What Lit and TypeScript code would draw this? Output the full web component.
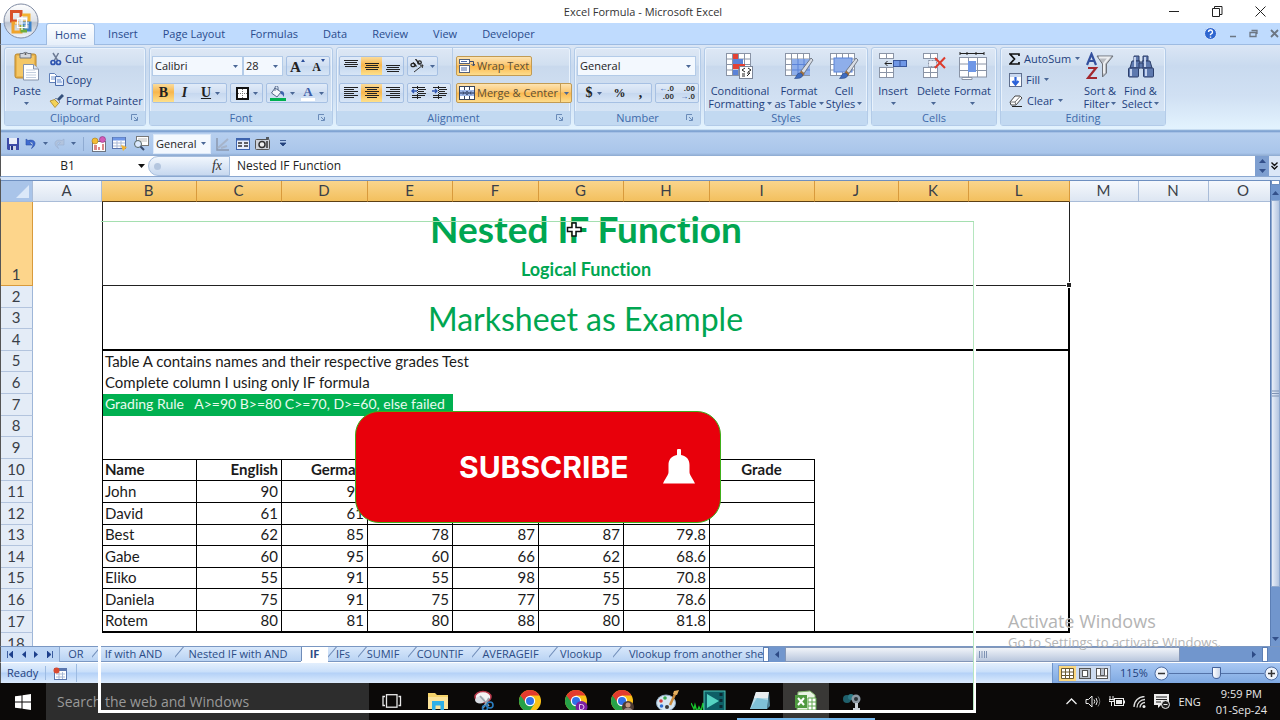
import { LitElement, html, css, svg, nothing } from "lit";
import { customElement } from "lit/decorators.js";
import { classMap } from "lit/directives/class-map.js";

const caret = html`<svg class="caret" width="5" height="3" viewBox="0 0 5 3"><path d="M0 0h5L2.5 3z" fill="currentColor" /></svg>`;

const launcher = html`<button class="launch" aria-label="More options">
  <svg width="8" height="8" viewBox="0 0 8 8" fill="none" stroke="#6a8bb8"><path d="M.5 6V.5H6" /><path d="M3 3l3 3M6.500 3v3.500H3" /></svg>
</button>`;

const icon = (w: number, h: number, body: unknown) =>
  html`<svg width=${w} height=${h} viewBox="0 0 ${w} ${h}" aria-hidden="true">${body}</svg>`;

const lines = (rows: number[][], color = "#222") =>
  rows.map(([x, y, w]) => svg`<rect x=${x} y=${y} width=${w} height="1" fill=${color} />`);

const brush = svg`<path d="M27 6 17 19l3 2.500L29 8z" fill="#d9dde5" stroke="#5d6470" stroke-width=".8"/>
  <path d="M17 18.500l3.500 3-1.500 3-3.500-3z" fill="#a0703c"/><path d="M15.500 21c2 0 3.500 1.500 3 3-1 2.500-5 2.500-8 2.500 2-1.500 2-5 5-5.500z" fill="#3f6cc0" stroke="#2c4a86" stroke-width=".6"/>`;

const gridLines = (x: number, y: number, cols: number, rows: number, cw: number, ch: number) => {
  const out = [svg`<rect x=${x} y=${y} width=${cols * cw} height=${rows * ch} fill="#fff" stroke="#8a94a6" />`];
  for (let i = 1; i < cols; i++) out.push(svg`<path d="M${x + i * cw} ${y}v${rows * ch}" stroke="#8a94a6"/>`);
  for (let j = 1; j < rows; j++) out.push(svg`<path d="M${x} ${y + j * ch}h${cols * cw}" stroke="#8a94a6"/>`);
  return out;
};

const I = {
  paste: icon(26, 30, svg`<rect x="1" y="3" width="21" height="24" rx="2" fill="#e9b44c" stroke="#b9862c"/>
    <rect x="3" y="5" width="17" height="20" fill="#f4c766"/>
    <path d="M6 2.500h3a3 2.500 0 0 1 5 0h3V7H6z" fill="#d4d8de" stroke="#6c7480"/><circle cx="11.500" cy="3" r="1" fill="#555"/>
    <path d="M9.500 13.500h10l5 4.500v11h-15z" fill="#fff" stroke="#8593ab"/><path d="M19.500 13.500v4.500h5" fill="#dbe5f3" stroke="#8593ab"/>
    <path d="M12 19h9M12 21.500h10M12 24h10M12 26.500h10" stroke="#c3cede"/>`),
  cut: icon(14, 14, svg`<path d="M4 1l5 8M9.500 1L5 9" stroke="#6c7a94" stroke-width="1.500"/><circle cx="4" cy="10.500" r="2" fill="none" stroke="#2f55b0" stroke-width="1.700"/><circle cx="9.500" cy="10.500" r="2" fill="none" stroke="#2f55b0" stroke-width="1.700"/>`),
  copy: icon(15, 13, svg`<path d="M.5.500h5l2 2v7h-7z" fill="#fff" stroke="#5f7fb8"/><path d="M6.500 3.500h5l3 3v6h-8z" fill="#e6eefb" stroke="#4a6cab"/><path d="M8 7h4M8 9h5M2 4h4M2 6h4" stroke="#6e93d0"/>`),
  painter: icon(15, 14, svg`<path d="M14 1L9 6" stroke="#34507c" stroke-width="3"/><path d="M7 4l4 4-1.500 1.500-4-4z" fill="#cdd6e6" stroke="#5c6c86" stroke-width=".7"/><path d="M5.500 5.500L1 7l5 6.500 3.500-4z" fill="#f3d257" stroke="#ad8724" stroke-width=".8"/>`),
  borders: icon(13, 13, svg`<rect x="1" y="1" width="11" height="11" fill="#fff" stroke="#111" stroke-width="2"/><path d="M6.500 2v9M2 6.500h9" stroke="#777" stroke-dasharray="1 1"/>`),
  fill: icon(16, 15, svg`<path d="M5 2l6 4-4 5-5.500-4z" fill="#f4f7fc" stroke="#55688a"/><path d="M5 5V1.500a1.500 1.500 0 0 1 3 0V4" fill="none" stroke="#55688a"/><path d="M11 5c3 0 4 3 2.500 6-.5-2-1-3-3-3z" fill="#3c62ab"/><rect y="12" width="16" height="3" fill="#00b050"/>`),
  grow: icon(4, 3, svg`<path d="M0 3h4L2 0z" fill="#2c4f9a"/>`),
  shrink: icon(4, 3, svg`<path d="M0 0h4L2 3z" fill="#2c4f9a"/>`),
  top: icon(14, 14, lines([[0, 1, 14], [1, 3, 12], [0, 5, 14], [1, 7, 12]])),
  mid: icon(14, 14, lines([[0, 4, 14], [1, 6, 12], [0, 8, 14], [1, 10, 12]])),
  bot: icon(14, 14, lines([[0, 6, 14], [1, 8, 12], [0, 10, 14], [1, 12, 12]])),
  left: icon(14, 14, lines([[0, 1, 14], [0, 3, 10], [0, 5, 14], [0, 7, 10], [0, 9, 14], [0, 11, 10]])),
  center: icon(14, 14, lines([[0, 1, 14], [2, 3, 10], [0, 5, 14], [2, 7, 10], [0, 9, 14], [2, 11, 10]])),
  right: icon(14, 14, lines([[0, 1, 14], [4, 3, 10], [0, 5, 14], [4, 7, 10], [0, 9, 14], [4, 11, 10]])),
  orient: icon(16, 14, svg`<path d="M4 13L13 6M13 6l-3 .3M13 6l-.8 3" stroke="#333" fill="none"/><ellipse cx="3" cy="6" rx="2" ry="1.700" fill="none" stroke="#222" stroke-width="1.300"/><path d="M3 3.500l3.500 4M5.500 0l4 5" stroke="#222" stroke-width="1.300"/><ellipse cx="9.500" cy="3.500" rx="1.800" ry="1.600" fill="none" stroke="#222" stroke-width="1.300"/>`),
  outdent: icon(15, 14, svg`${lines([[1, 1, 13], [7, 3, 8], [7, 5, 6], [7, 7, 8], [1, 9, 13], [1, 11, 9]])}<path d="M6 5H1M3 3L1 5l2 2" stroke="#2f55b0" stroke-width="1.400" fill="none"/><path d="M6.500 0v13" stroke="#222" stroke-dasharray="1 1"/>`),
  indent: icon(15, 14, svg`${lines([[1, 1, 13], [7, 3, 8], [7, 5, 6], [7, 7, 8], [1, 9, 13], [1, 11, 9]])}<path d="M0 5h5M3 3l2 2-2 2" stroke="#2f55b0" stroke-width="1.400" fill="none"/><path d="M6.500 0v13" stroke="#222" stroke-dasharray="1 1"/>`),
  wrap: icon(16, 14, svg`<rect x=".5" y=".5" width="10" height="4" fill="#fff" stroke="#54617a"/><path d="M2 2.500h6" stroke="#4b69a8"/><rect x=".5" y="6.500" width="10" height="7" fill="#fff" stroke="#54617a"/><path d="M2 9h6M2 11h6" stroke="#4b69a8"/><path d="M11 2.500h3.500v4M12.500 5l2 2 1.500-2" fill="none" stroke="#394a6c"/>`),
  merge: icon(16, 14, svg`<rect x=".5" y=".5" width="15" height="13" fill="#fff" stroke="#39465e"/><path d="M5.500 1v3M10.500 1v3M5.500 10v3M10.500 10v3" stroke="#39465e"/><rect x="1" y="4" width="14" height="6" fill="#9cb6e6"/><path d="M1 7h4M15 7h-4M4 5.500L5.500 7 4 8.500M12 5.500L10.500 7 12 8.500" stroke="#1d2b4d" fill="none"/><circle cx="8" cy="7" r="1.300" fill="none" stroke="#1d2b4d"/>`),
  cond: icon(30, 28, svg`${gridLines(1.5, 1.5, 4, 4, 6, 5.5)}<rect x="8" y="2" width="5" height="5" fill="#e34234"/><rect x="8" y="7" width="10" height="5" fill="#5b83d8"/><rect x="8" y="12" width="12" height="5" fill="#e34234"/><rect x="8" y="18" width="5" height="5" fill="#5b83d8"/><rect x="14.500" y="14.500" width="13" height="12" fill="#fff" stroke="#7c8699"/><path d="M20 16l-3 2 3 2M17 22h3M17 24h3M23 16l3 2-3 2M22 24l3-3M22 21h3" stroke="#222" fill="none"/>`),
  fmtTable: icon(30, 28, svg`${gridLines(1.5, 1.5, 4, 4, 6, 5.5)}<rect x="8" y="7" width="18" height="16" fill="#8eaeea"/><path d="M14 7v16M20 7v16M8 12.500h18M8 18h18" stroke="#5b83d8"/>${brush}`),
  styles: icon(30, 28, svg`${gridLines(1.5, 1.5, 4, 4, 6, 5.5)}<rect x="5" y="6" width="18" height="14" fill="#8eaeea" stroke="#5b83d8"/>${brush}`),
  insert: icon(30, 28, svg`${gridLines(1.5, 1.5, 2, 1, 7, 5)}${gridLines(1.5, 15.5, 2, 2, 7, 5)}<rect x="15.500" y="8.500" width="13" height="6" fill="#6f97e6" stroke="#39579c"/><path d="M22 8.500v6" stroke="#39579c"/><path d="M14 11.500H7M9.500 9L7 11.500 9.500 14" stroke="#222" fill="none"/>`),
  del: icon(30, 28, svg`${gridLines(4.5, 1.5, 2, 1, 7, 5)}${gridLines(4.5, 15.5, 2, 2, 7, 5)}<path d="M9.500 8.500h8v6h-8z" fill="#e8edf6" stroke="#8a94a6" stroke-dasharray="2 1"/><path d="M16 6l10 10M26 5.500L16 16" stroke="#dd3b2c" stroke-width="2"/>`),
  format: icon(30, 28, svg`<path d="M2 1.500h24M2 0v3M26 0v3M9 0v3M18 0v3" stroke="#222"/>${gridLines(1.5, 5.5, 3, 3, 9, 6.5)}<rect x="10" y="9" width="8" height="11" fill="#6f97e6"/><path d="M4 25.500h10v2H4z" fill="#fff" stroke="#8a94a6"/>`),
  sum: icon(11, 12, svg`<path d="M10 3V1H1l4.500 5L1 11h9V9" fill="none" stroke="#111" stroke-width="1.700"/>`),
  fillDown: icon(13, 14, svg`<rect x=".5" y=".5" width="12" height="13" fill="#fff" stroke="#5f6f8e"/><rect x="1" y="1" width="11" height="3" fill="#c9d8f0"/><path d="M6.500 4v6M3.500 8l3 3.500 3-3.500" stroke="#2b62d9" stroke-width="2.200" fill="none"/>`),
  clear: icon(14, 12, svg`<path d="M6 1h5l2 2-6 7H2L1 7z" fill="#fff" stroke="#444"/><path d="M1 7h5l1 3M6 7l5.500-6" stroke="#777" fill="none"/><path d="M3 11.500h10" stroke="#222"/>`),
  sort: icon(28, 28, svg`<path d="M11 4h16l-6.500 8v9l-4 4V12z" fill="#b9bcc2" stroke="#6d7178"/><path d="M13 5.500h10l-5 6v10" fill="none" stroke="#eceef1" stroke-width="2"/><path d="M1 13L5.500 2 10 13M3 9h5" stroke="#33509e" stroke-width="2.200" fill="none"/><path d="M2 16h8L2 26h9" stroke="#a3282e" stroke-width="2.200" fill="none"/>`),
  find: icon(28, 26, svg`<g fill="#5e79ae" stroke="#2c3f6b"><path d="M7 3h5v5h-5zM16 3h5v5h-5z"/><path d="M5 8h8v7H3zM15 8h8l2 7H15z"/><rect x="1.500" y="15" width="10" height="9" rx="1"/><rect x="16.500" y="15" width="10" height="9" rx="1"/><path d="M12 10h4v5h-4z"/></g><path d="M4 16v7M19 16v7M8 4v10M18 4v10" stroke="#c5d3ee" stroke-width="2"/>`),
  save: icon(12, 12, svg`<path d="M0 0h12v12H1L0 11z" fill="#3d4ba8"/><rect x="2" y="0" width="8" height="6" fill="#e9edf8"/><rect x="3" y="8" width="6" height="4" fill="#cdd3e8"/><rect x="4" y="8" width="2" height="4" fill="#22307f"/>`),
  undo: icon(12, 12, svg`<path d="M1 1v6h6L4.500 4.500c3-1.500 5 1 2 6 6-4 4-10-3.500-8z" fill="#3f6bd0" stroke="#2a4ea5" stroke-width=".6"/>`),
  redo: icon(12, 12, svg`<path d="M11 1v6H5l2.500-2.500c-3-1.500-5 1-2 6-6-4-4-10 3.500-8z" fill="#b2c4de" stroke="#98aed0" stroke-width=".6"/>`),
  q1: icon(16, 16, svg`<rect x="1.500" y="5.500" width="13" height="10" fill="#fff" stroke="#6d7480"/><path d="M3 14V9h3v5M7 14v-3h2v3M11 14V8h2v6" fill="#d88"/><circle cx="4" cy="5" r="3" fill="#f3bd34" stroke="#a87b15" stroke-width=".6"/><circle cx="11.500" cy="3.500" r="3" fill="#d35bb8" stroke="#8c2f78" stroke-width=".6"/>`),
  q2: icon(16, 14, svg`<rect x=".5" y=".5" width="13" height="11" fill="#fff" stroke="#5a76ae"/><path d="M1 2h12" stroke="#6f97e6" stroke-width="3"/><path d="M1 6h12M1 9h12M5 4v7M9 4v7" stroke="#a9b9d6"/><path d="M9 8l6 2-4 4z" fill="#f0b437"/>`),
  q3: icon(16, 15, svg`<rect x="3.500" y=".5" width="12" height="9" fill="#fff" stroke="#777"/><path d="M5 3h9M5 5h9" stroke="#bbb"/><circle cx="5" cy="8" r="3.500" fill="#dceaff" stroke="#566"/><path d="M7.500 10.500L11 14" stroke="#3b4c6e" stroke-width="2"/>`),
  q4: icon(14, 14, svg`<path d="M1 1v12h12" fill="none" stroke="#8b98ae" stroke-width="1.500"/><path d="M2 11L12 2M5 11l6-2" stroke="#a6b4ca" stroke-width="2"/>`),
  q5: icon(14, 12, svg`<rect x=".5" y=".5" width="13" height="11" fill="#e8eefa" stroke="#3e64ae"/><path d="M1 1.500h12" stroke="#3e64ae" stroke-width="2"/><path d="M2 5h4M8 5h4M2 8h4M8 8h4" stroke="#333" stroke-width="1.500"/>`),
  q6: icon(15, 13, svg`<rect x=".5" y="2.500" width="14" height="10" rx="1" fill="#cfd3da" stroke="#555"/><circle cx="7" cy="7.500" r="3" fill="#eee" stroke="#333" stroke-width="1.500"/><path d="M11 1h3M12 4v7" stroke="#333" stroke-width="1.500"/>`),
};

const chromeLogo = (badge: unknown = nothing) => icon(24, 24, svg`<g transform="translate(1 1)"><circle cx="11" cy="11" r="11" fill="#fbc116"/>
  <path d="M11 11L1.500 5.500A11 11 0 0 0 10 22l5.700-8.500z" fill="#26a148"/><path d="M1.500 5.500A11 11 0 0 1 20.500 5.500H11L7 13z" fill="#e33b2e"/>
  <circle cx="11" cy="11" r="5.200" fill="#fff"/><circle cx="11" cy="11" r="4" fill="#2f72e8"/>${badge}</g>`);

const APPS = [
  { name: "Task View", open: "", art: icon(20, 14, svg`<g fill="none" stroke="#e8e8e8" stroke-width="1.300"><rect x="4.500" y=".7" width="10.500" height="12.500"/><path d="M3 2.500H1v9h2M16.500 2.500h2v9h-2"/></g>`) },
  { name: "File Explorer", open: "", art: icon(22, 20, svg`<path d="M1 2h7l2 2h11v14H1z" fill="#f5d36a"/><path d="M1 6h20v12H1z" fill="#fbe39a"/><path d="M5 10h12v9h-3.500v-4.500h-5V19H5z" fill="#2fb0e6"/>`) },
  { name: "Snipping Tool", open: "", art: icon(24, 22, svg`<ellipse cx="11" cy="7" rx="8" ry="5.500" fill="#f3f3f5" stroke="#b9394c" stroke-width="1.500"/><ellipse cx="8" cy="10" rx="5" ry="3.500" fill="#d9dde3"/><path d="M8 6l9 10M17 8l-6 10" stroke="#9aa3ad" stroke-width="1.800"/><circle cx="18" cy="15" r="3" fill="none" stroke="#2c7fc0" stroke-width="1.600"/><circle cx="13" cy="18" r="2.500" fill="none" stroke="#2c7fc0" stroke-width="1.600"/>`) },
  { name: "Chrome", open: "", art: chromeLogo() },
  { name: "Chrome", open: "", art: chromeLogo(svg`<circle cx="16.500" cy="17" r="6" fill="#7b1fa2"/><path d="M14.500 14.500h2a2.500 2.500 0 0 1 0 5h-2z" fill="none" stroke="#e8c8f4"/>`) },
  { name: "Chrome", open: "", art: chromeLogo(svg`<circle cx="17" cy="17" r="6" fill="#4c3a33"/><circle cx="17" cy="15" r="2.500" fill="#c79a80"/><path d="M12.500 20a5 4 0 0 1 9 0z" fill="#9a8a84"/>`) },
  { name: "Paint", open: "", art: icon(24, 22, svg`<ellipse cx="10" cy="13" rx="9.500" ry="8" fill="#d6e6f2" stroke="#8eabc4"/><circle cx="5" cy="11" r="1.800" fill="#d63c3c"/><circle cx="9" cy="8" r="1.800" fill="#3aa851"/><circle cx="5.500" cy="16" r="1.800" fill="#2f6fd6"/><circle cx="11" cy="17" r="2" fill="#3a3a3a"/><path d="M20 2L14 15" stroke="#c98a3c" stroke-width="2.500"/><path d="M18 1l5-1-2 5-4-1z" fill="#e6b05f"/>`) },
  { name: "Filmora", open: "", art: icon(46, 24, svg`<path d="M0 14l3 6 1-4 2 7 2-5 2 4 2-8 1 7 2-3" stroke="#17c52c" stroke-width="1.400" fill="none"/><rect x="13" y="2" width="21" height="20" fill="#0d5f66" stroke="#4fc7b8"/><path d="M16 5l12 7-12 7z" fill="#55d3c2"/><path d="M30 4v3M30 10v3M30 16v3" stroke="#0a2a33" stroke-width="3"/>`) },
  { name: "Notepad", open: "open", art: icon(24, 22, svg`<path d="M8 2h13l-2 17H2z" fill="#b7dbe8"/><path d="M8 2h13l-1 6H6z" fill="#e9eef0"/><path d="M9 8l11 2-1 9H2z" fill="#7fc0d6"/><path d="M21 2l-2 17 3-3z" fill="#4c8197"/>`) },
  { name: "Excel", open: "open current", art: icon(24, 22, svg`<path d="M4 2l12-1 5 4v15H3z" fill="#e8f3e2" stroke="#7fb069"/><path d="M1 5h12v13H1z" fill="#4f9a3f"/><path d="M4 8l6 7M10 8l-6 7" stroke="#fff" stroke-width="2"/><path d="M14 8h8v12h-8zM14 12h8M14 16h8M18 8v12" fill="#fff" stroke="#5fa64c"/>`) },
  { name: "Camera", open: "open", art: icon(24, 22, svg`<circle cx="7" cy="9" r="4" fill="#1f5f6b"/><circle cx="11" cy="7" r="3" fill="#2b7a86"/><circle cx="16" cy="9" r="4.500" fill="#8d99a3"/><circle cx="16" cy="9" r="2" fill="#2a3338"/><path d="M15 13h3v5h2v2h-7v-2h2z" fill="#c9d0d6"/>`) },
];

const COLS = [
  ["A", 69], ["B", 95], ["C", 85], ["D", 86], ["E", 85], ["F", 86], ["G", 85], ["H", 86],
  ["I", 105], ["J", 84], ["K", 70], ["L", 101], ["M", 69], ["N", 70], ["O", 70],
] as [string, number][];

const HEAD = ["Name", "English", "German", "", "", "", "", "Grade"];
const MARKS = [
  ["John", "90", "90", "", "", "", "", ""],
  ["David", "61", "61", "", "", "", "", ""],
  ["Best", "62", "85", "78", "87", "87", "79.8", ""],
  ["Gabe", "60", "95", "60", "66", "62", "68.6", ""],
  ["Eliko", "55", "91", "55", "98", "55", "70.8", ""],
  ["Daniela", "75", "91", "75", "77", "75", "78.6", ""],
  ["Rotem", "80", "81", "80", "88", "80", "81.8", ""],
];

const SHEETS = ["OR", "If with AND", "Nested IF with AND", "IF", "IFs", "SUMIF", "COUNTIF", "AVERAGEIF", "Vlookup", "Vlookup from another sheet"];

@customElement("app-root")
export class AppRoot extends LitElement {
  static styles = css`
    :host { display: flex; flex-direction: column; position: relative; height: 100vh; overflow: hidden; background: #fff;
      font: 11px/14px "Open Sans", "Noto Sans", sans-serif; color: #1e3f7d; }
    *, *::before { box-sizing: border-box; }
    svg { display: block; flex: none; }
    button { font: inherit; color: inherit; background: none; border: 0; padding: 0; margin: 0; display: flex; align-items: center; justify-content: center; white-space: nowrap; }
    input, select { font: inherit; color: inherit; border: 0; margin: 0; padding: 0; border-radius: 0; background: none; min-width: 0; outline: 0; appearance: none; }
    .title { height: 23px; flex: none; display: grid; grid-template-columns: 1fr auto 1fr; align-items: center; padding-left: 6px; color: #333; }
    .title h1 { font: inherit; margin: 0; grid-column: 2; }
    .winbtns { display: flex; justify-content: flex-end; gap: 32px; padding-right: 14px; }
    .orb { position: absolute; left: 3px; top: 3px; width: 36px; height: 36px; z-index: 3; }
    .tabs { height: 22px; flex: none; display: flex; gap: 1px; padding-left: 45px; background: #bfdbfe; border-bottom: 1px solid #9dbbe2; border-left: 1px solid #555; color: #2a4b8d; }
    .tabs > button { padding: 0 12px; height: 22px; }
    .tabs .on { background: linear-gradient(#fff, #e6effa); border: 1px solid #9dbbe2; border-bottom: 0; border-radius: 3px 3px 0 0; padding: 0 8px; }
    .docbtns { margin-left: auto; display: flex; gap: 12px; align-items: center; padding-right: 1px; }
    .ribbon { height: 84px; flex: none; display: flex; gap: 3px; padding: 2px 3px 3px; background: linear-gradient(#dbe6f5, #c9daef 25%, #d0e0f3 60%, #e3f3fe); border-left: 1px solid #555; }
    .group { display: flex; flex-direction: column; flex: none; border: 1px solid #b3cbe8; border-radius: 3px; background: linear-gradient(#dee8f5, #d1dff0 22%, #c9d9ed 24%, #d9e7f7); box-shadow: 0 0 0 1px #e9f2fc inset; }
    .body { flex: 1; display: flex; min-height: 0; }
    .cap { height: 14px; display: grid; grid-template-columns: 16px 1fr 16px; align-items: center; text-align: center; background: #c2d9f1; color: #3e6aaa; }
    .cap span { grid-column: 2; }
    .launch { width: 12px; }
    .w1 { width: 142px; } .w2 { width: 184px; } .w3 { width: 235px; } .w4 { width: 127px; } .w5 { width: 164px; } .w6 { width: 126px; } .w7 { width: 166px; }
    .big { flex-direction: column; justify-content: flex-start; padding-top: 2px; gap: 3px; text-align: center; line-height: 13px; }
    .big .ico { height: 31px; display: flex; align-items: center; }
    .big .two { display: flex; align-items: center; gap: 2px; }
    .big .lbl { display: flex; flex-direction: column; align-items: center; }
    .big .solo { height: 12px; display: flex; align-items: center; }
    .caret { color: #4a6796; }
    .small { display: flex; flex-direction: column; justify-content: flex-start; }
    .small button { height: 21px; justify-content: flex-start; gap: 2px; }
    .clip .big { width: 44px; }
    .edit .small { width: 78px; padding-left: 8px; }
    .edit .small button { gap: 4px; }
    .big.b70 { width: 70px; }
    .big.b50 { width: 48px; }
    .big.b42 { width: 42px; }
    .big.b38 { width: 39px; }
    .rows { flex: 1; display: flex; flex-direction: column; gap: 7px; padding: 8px 3px 0 2px; }
    .row { display: flex; gap: 3px; height: 20px; }
    .box { display: flex; border: 1px solid #a6c0e3; border-radius: 2px; background: linear-gradient(#e1ebf8, #cfdef2 50%, #c6d8ef 52%, #d7e5f6); }
    .box button { width: 21px; gap: 4px; }
    .box button.wide { width: 31px; }
    .box button.w29 { width: 29px; }
    .box button.size { gap: 0; align-items: flex-start; padding-top: 2px; }
    .box .sel { background: linear-gradient(#fbdc9c, #f7b64c 45%, #fde08b); }
    .serif { font: bold 14px/16px "Liberation Serif", serif; color: #222; }
    .serif.it { font-style: italic; }
    .serif.un { text-decoration: underline; }
    .serif.sm { font-size: 12px; }
    .serif.lg { font-size: 15px; }
    .fc { display: flex; flex-direction: column; align-items: center; font: bold 13px/13px "Liberation Serif", serif; color: #3b5ba5; border-bottom: 3px solid #fff; width: 14px; }
    .combo { display: grid; background: #f3f8fe; border: 1px solid #b3cbe8; color: #222; align-items: center; }
    .combo select, .combo .caret { grid-area: 1 / 1; }
    .combo select { padding-left: 2px; width: 100%; height: 100%; }
    .combo .caret { justify-self: end; margin-right: 4px; pointer-events: none; }
    .cname { width: 91px; } .csize { width: 40px; margin-left: -3px; } .cnum { width: 119px; }
    .hot { border: 1px solid #c29b53; border-radius: 2px; gap: 2px; color: #5d5136; background: linear-gradient(#fde3b1, #fbc772 45%, #fbb84e 50%, #fddc8c); height: 20px; padding: 0 2px; }
    .hot .drop { border-left: 1px solid #c29b53; height: 18px; display: flex; align-items: center; padding-left: 3px; }
    .colR { display: flex; flex-direction: column; gap: 7px; padding: 8px 2px 0 3px; }
    .colR .hot { align-self: flex-start; }
    .align .rows { flex: none; width: 116px; padding-right: 0; border-right: 1px solid #b6cbe6; }
    .tiny { font: bold 8px/8px "Liberation Sans", sans-serif; color: #333; text-align: right; }
    .tiny i { font-style: normal; color: #2f55b0; }
    .qat { height: 27px; flex: none; display: flex; align-items: center; gap: 5px; padding: 2px 0 0 4px; background: linear-gradient(#e3f3fe, #6f96ca 2px, #b7cfef 4px, #a9c5ea 24px, #8daad0); border-left: 1px solid #555; }
    .qat button { min-width: 15px; height: 18px; gap: 6px; }
    .qat .gen { width: 58px; height: 20px; margin: 0 -1px; border-color: #dbe8f8; }
    .bar { width: 1px; height: 14px; background: #8fabd2; margin: 0 2px; }
    .fbar { height: 21px; flex: none; display: flex; border-left: 1px solid #555; border-bottom: 1px solid #8aa7d0; color: #222; font-size: 12px; background: #fff; }
    .fbar .name { width: 133px; text-align: center; }
    .fbar .nd { width: 14px; color: #222; }
    .fbar .fx { width: 82px; border-radius: 10px 0 0 10px; border: 1px solid #a6bede; background: linear-gradient(#f2f7fd, #c7d8ef); justify-content: flex-end; padding-right: 7px; font: italic 14px/16px "Liberation Serif", serif; color: #333; }
    .fbar .fx i { margin-right: auto; margin-left: 5px; width: 7px; height: 7px; border-radius: 50%; background: #b4c6df; }
    .fbar .val { flex: 1; padding-left: 7px; font-size: 12px; }
    .spin { width: 14px; background: #7e9fd0; flex-direction: column; gap: 6px; color: #33508a; }
    .exp { width: 11px; background: #dbe7f7; }
    .mid { flex: 1; min-height: 0; display: flex; border-top: 3px solid #d6e5f8; border-left: 1px solid #555; }
    .view { flex: 1; min-width: 0; overflow: hidden; border-top: 1px solid #6e8fc0; }
    table { table-layout: fixed; border-collapse: separate; border-spacing: 0; width: 0; font: 15px/18px Lato, "Open Sans", sans-serif; font-variant-ligatures: none; color: #1b1b1b; }
    th, td { padding: 0 3px 2px 2px; overflow: hidden; white-space: nowrap; height: 22px; text-align: right; font-weight: normal; }
    tr.odd > th, tr.odd > td { height: 21px; }
    .rh { width: 32px; }
    thead th { height: 21px; text-align: center; background: linear-gradient(#f5f8fd, #dde6f2); border-right: 1px solid #a9bcd8; border-bottom: 1px solid #a9bcd8; color: #3a3f48; }
    thead th.on { background: linear-gradient(#fad58c, #f3c05e); border-right-color: #d89a3c; border-bottom: 1px solid #5c3f14; }
    thead .corner { background: #a9c4e9; padding: 2px 3px; }
    .corner svg { margin-left: auto; }
    tbody th { text-align: center; background: #e4ecf7; border-right: 1px solid #9eb6d8; border-bottom: 1px solid #b3c4de; color: #3a3f48; }
    tbody th.on { background: #fdd58b; border-color: #d89a3c; vertical-align: bottom; }
    tr.first > th, tr.first > td { height: 84px; }
    .t { text-align: left; }
    td.m1 { border: 1px solid #222; border-top: 0; text-align: center; color: #00a651; padding: 0; vertical-align: top; }
    td.m1 strong { display: block; font-size: 37px; line-height: 54px; }
    td.m1 b { display: block; font-size: 18px; line-height: 26px; }
    td.m2 { border: 2px solid #000; border-top: 0; border-left-width: 1px; text-align: center; color: #00a651; font-size: 32px; line-height: 40px; padding: 2px 0 0; }
    td.end { border-right: 2px solid #000; }
    td.start { border-left: 1px solid #000; }
    td.green { background: #00b050; color: #e9fbef; border-left: 1px solid #000; text-align: left; font-size: 14px; }
    td.d { border-right: 1px solid #000; border-bottom: 1px solid #000; }
    td.d.l { border-left: 1px solid #000; text-align: left; }
    td.hd { font-weight: bold; border-top: 1px solid #000; }
    td.last { border-bottom: 2px solid #000; }
    td.c { text-align: center; }
    .vs { width: 10px; flex: none; display: flex; flex-direction: column; background: #7196cd; border-left: 1px solid #5c7fb5; align-items: stretch; }
    .vs i { height: 5px; background: #fff; border: 1px solid #6e8fc0; }
    .vs button { height: 15px; color: #2d4a86; }
    .vs .thumb { flex: 1; background: linear-gradient(90deg, #e8eef8, #b3c5e0); border: 1px solid #8fa9cf; color: #6f86ab; }
    .vs .track { height: 44px; }
    .foot { height: 16px; flex: none; display: flex; background: #bcd5f5; border-left: 1px solid #555; border-top: 1px solid #7a97c2; }
    .nav { width: 59px; display: flex; justify-content: space-around; color: #1c3f8b; border-right: 1px solid #8aa7d0; padding: 0 2px; }
    .sheets { width: 703px; display: grid; grid-template-columns: 32px 83px 126px 27px 30px 50px 64px 77px 64px 1fr; overflow: hidden; font-size: 11px; color: #2b4c86; }
    .sheets button { position: relative; background: linear-gradient(#d8e8fb, #b9d3f3); border-bottom: 1px solid #7a97c2; overflow: hidden; }
    .sheets button:not(:first-child)::before { content: ""; position: absolute; left: 2px; top: -3px; width: 1px; height: 20px; background: #6f8cb8; transform: rotate(40deg); }
    .sheets .act { background: #fff; font-weight: bold; border-bottom-color: #fff; }
    .sheets button.act::before { transform: none; left: 0; }
    .sheets button:last-child { justify-content: flex-start; padding-left: 16px; }
    .grip { width: 6px; background: #fff; border: 1px solid #5c7fb5; }
    .gap { width: 12px; background: #7196cd; }
    .hs { flex: 1; display: flex; background: #7196cd; color: #2d4a86; }
    .hs button { width: 16px; }
    .hs .thumb { flex: 6; background: linear-gradient(#f1f4f9, #b9c7dd); border: 1px solid #8296b8; color: #7788a5; }
    .hs .track { flex: 1; max-width: 66px; }
    .status { height: 21px; flex: none; display: flex; align-items: center; background: linear-gradient(#e3effd, #c9dffa 45%, #b4d1f7 50%, #dcebfd); border-left: 1px solid #555; border-top: 1px solid #fff; }
    .status .rd { padding: 0 7px 0 6px; border-right: 1px solid #9dbbe2; }
    .status .mac { padding: 0 9px 0 7px; border-right: 1px solid #9dbbe2; height: 18px; }
    .zoomer { margin-left: auto; height: 20px; width: 228px; display: flex; align-items: center; padding: 0 1px 0 5px; background: linear-gradient(#a9c8f3, #7fa9e2); border-left: 1px solid #6f94c9; }
    .views { display: flex; border: 1px solid #7f9cc8; background: #cddcf1; margin-right: 9px; }
    .views button { width: 17px; height: 15px; }
    .views .on { background: #fbd87f; }
    .pct { margin-right: 6px; }
    .range { flex: 1; height: 16px; background: linear-gradient(#5473a8, #5473a8) 0 8px / 100% 1px no-repeat; }
    .range::-webkit-slider-thumb { appearance: none; width: 9px; height: 12px; border: 1px solid #44629a; background: linear-gradient(90deg, #fff, #c9d6ea); border-radius: 1px 1px 5px 5px; }
    .task { height: 37px; flex: none; display: flex; background: #0b0908; color: #e8e8e8; font-size: 11px; }
    .start { width: 46px; }
    .search { width: 323px; background: #2d2d2d; padding-left: 11px; font-size: 14px; color: #999; }
    .search::placeholder { color: #999; }
    .apps { display: flex; }
    .apps button { width: 46px; border-bottom: 2px solid transparent; }
    .apps .open { border-bottom-color: #76b9ed; background-clip: padding-box; }
    .apps .current { background-color: #393836; }
    .tray { margin-left: auto; display: flex; align-items: center; gap: 8px; padding-right: 13px; }
    .clock { text-align: center; line-height: 16px; margin-left: 7px; }
    .frame { position: absolute; left: 98px; right: 304px; top: 221px; bottom: 7px; border: solid #fff; border-width: 0 2px 3px 3px; box-shadow: inset 0 1px #a5dfb0, inset -1px 0 #b5e6bf; pointer-events: none; z-index: 4; }
    .sub { position: absolute; left: 355px; top: 411px; width: 366px; height: 112px; z-index: 5; border-radius: 24px; background: #e8000b; border: 1px solid #3fae1b; color: #fff; font: bold 30px/34px Inter, sans-serif; gap: 34px; justify-content: flex-start; padding-left: 103px; }
    .cursor { position: absolute; left: 566px; top: 222px; z-index: 6; }
    .handle { position: absolute; left: 1066px; top: 282px; width: 6px; height: 6px; background: #222; border: 1px solid #fff; z-index: 2; }
    .wm { position: absolute; right: 49px; bottom: 68px; width: 223px; margin: 0; z-index: 6; color: #b4b4b4; font-size: 13px; line-height: 20px; pointer-events: none; white-space: nowrap; }
    .wm span { display: block; font-size: 18px; line-height: 22px; }
  `;

  private big(cls: string, ico: unknown, a: string, b?: string) {
    return html`<button class="big ${cls}"><span class="ico">${ico}</span>
      <span class="lbl"><span>${a}</span>${b ? html`<span class="two">${b}${caret}</span>` : html`<span class="solo">${caret}</span>`}</span></button>`;
  }

  private group(w: string, cap: string, body: unknown, more = false) {
    return html`<section class="group ${w}"><div class="body">${body}</div><div class="cap"><span>${cap}</span>${more ? launcher : nothing}</div></section>`;
  }

  private ribbon() {
    return html`<div class="ribbon">
      ${this.group("w1 clip", "Clipboard", html`${this.big("", I.paste, "Paste")}
        <div class="small"><button>${I.cut}Cut</button><button>${I.copy}Copy</button><button>${I.painter}Format Painter</button></div>`, true)}
      ${this.group("w2", "Font", html`<div class="rows">
        <div class="row">
          <label class="combo cname"><select aria-label="Font"><option>Calibri</option></select>${caret}</label>
          <label class="combo csize"><select aria-label="Font size"><option>28</option></select>${caret}</label>
          <div class="box"><button class="size" aria-label="Grow font"><span class="serif lg">A</span>${I.grow}</button><button class="size" aria-label="Shrink font"><span class="serif sm">A</span>${I.shrink}</button></div>
        </div>
        <div class="row">
          <div class="box"><button class="sel"><span class="serif">B</span></button><button><span class="serif it">I</span></button><button class="wide"><span class="serif un">U</span>${caret}</button></div>
          <div class="box"><button class="wide" aria-label="Borders">${I.borders}${caret}</button></div>
          <div class="box"><button class="wide" aria-label="Fill colour">${I.fill}${caret}</button><button class="w29"><span class="fc">A</span>${caret}</button></div>
        </div></div>`, true)}
      ${this.group("w3 align", "Alignment", html`<div class="rows">
        <div class="row"><div class="box"><button aria-label="Top">${I.top}</button><button class="sel" aria-label="Middle">${I.mid}</button><button aria-label="Bottom">${I.bot}</button></div>
          <div class="box"><button class="w29" aria-label="Orientation">${I.orient}${caret}</button></div></div>
        <div class="row"><div class="box"><button aria-label="Left">${I.left}</button><button class="sel" aria-label="Center">${I.center}</button><button aria-label="Right">${I.right}</button></div>
          <div class="box"><button aria-label="Decrease indent">${I.outdent}</button><button aria-label="Increase indent">${I.indent}</button></div></div></div>
        <div class="colR"><button class="hot">${I.wrap}Wrap Text</button><button class="hot">${I.merge}Merge &amp; Center<span class="drop">${caret}</span></button></div>`, true)}
      ${this.group("w4", "Number", html`<div class="rows">
        <div class="row"><label class="combo cnum"><select aria-label="Number format"><option>General</option></select>${caret}</label></div>
        <div class="row"><div class="box"><button class="wide"><span class="serif">$</span>${caret}</button><button><span class="serif sm">%</span></button><button><span class="serif">,</span></button></div>
          <div class="box"><button><span class="tiny"><i>←</i>.0<br />.00</span></button><button><span class="tiny">.00<br /><i>→</i>.0</span></button></div></div></div>`, true)}
      ${this.group("w5", "Styles", html`${this.big("b70", I.cond, "Conditional", "Formatting")}${this.big("b50", I.fmtTable, "Format", "as Table")}${this.big("b42", I.styles, "Cell", "Styles")}`)}
      ${this.group("w6", "Cells", html`${this.big("b42", I.insert, "Insert")}${this.big("b38", I.del, "Delete")}${this.big("b38", I.format, "Format")}`)}
      ${this.group("w7 edit", "Editing", html`<div class="small"><button>${I.sum}AutoSum ${caret}</button><button>${I.fillDown}Fill ${caret}</button><button>${I.clear}Clear ${caret}</button></div>
        ${this.big("b42", I.sort, "Sort &", "Filter")}${this.big("b38", I.find, "Find &", "Select")}`)}
    </div>`;
  }

  private sheet() {
    const blank = (n: number) => html`<td colspan=${n}></td>`;
    const tail = html`<td class="end" colspan="3"></td>${blank(3)}`;
    const odd = (r: number) => [3, 5, 8, 10, 13, 15].includes(r);
    const tr = (r: number, cells: unknown) => html`<tr class=${odd(r) ? "odd" : ""}><th scope="row">${r}</th>${cells}</tr>`;
    return html`<table>
      <colgroup><col class="rh" />${COLS.map(([, w]) => html`<col style="width:${w}px" />`)}</colgroup>
      <thead><tr><th class="corner"><svg width="13" height="13"><path d="M13 0v13H0z" fill="#dbe8f9" /></svg></th>
        ${COLS.map(([n], i) => html`<th scope="col" class=${i > 0 && i < 12 ? "on" : ""}>${n}</th>`)}</tr></thead>
      <tbody>
        <tr class="first"><th scope="row" class="on">1</th>${blank(1)}<td class="m1" colspan="11"><strong>Nested IF Function</strong><b>Logical Function</b></td>${blank(3)}</tr>
        <tr><th scope="row">2</th>${blank(1)}<td class="m2" colspan="11" rowspan="3">Marksheet as Example</td>${blank(3)}</tr>
        ${tr(3, html`${blank(1)}${blank(3)}`)}
        ${tr(4, html`${blank(1)}${blank(3)}`)}
        ${tr(5, html`${blank(1)}<td class="t start" colspan="8">Table A contains names and their respective grades Test</td>${tail}`)}
        ${tr(6, html`${blank(1)}<td class="t start" colspan="8">Complete column I using only IF formula</td>${tail}`)}
        ${tr(7, html`${blank(1)}<td class="green" colspan="4">Grading Rule &nbsp; A&gt;=90 B&gt;=80 C&gt;=70, D&gt;=60, else failed</td>${blank(4)}${tail}`)}
        ${tr(8, html`${blank(1)}<td class="start" colspan="8"></td>${tail}`)}
        ${tr(9, html`${blank(1)}<td class="start" colspan="8"></td>${tail}`)}
        ${tr(10, html`${blank(1)}${HEAD.map((h, i) => html`<td class=${classMap({ d: true, hd: true, l: i === 0, c: i === 7 })}>${h}</td>`)}${tail}`)}
        ${MARKS.map((m, k) => tr(11 + k, html`${blank(1)}${m.map((v, i) => html`<td class=${classMap({ d: true, l: i === 0, last: k === 6 })}>${v}</td>`)}
          <td class=${classMap({ end: true, last: k === 6 })} colspan="3"></td>${blank(3)}`))}
        ${tr(18, blank(15))}
      </tbody>
    </table>`;
  }

  render() {
    return html`
      <header class="title"><h1>Excel Formula - Microsoft Excel</h1>
        <div class="winbtns">
          <button aria-label="Minimize">${icon(11, 11, svg`<path d="M0 5.500h10" stroke="#222"/>`)}</button>
          <button aria-label="Restore">${icon(11, 11, svg`<path d="M.5 2.500h7v8h-7zM2.500 2.500v-2h7.500v8H7.500" fill="none" stroke="#222"/>`)}</button>
          <button aria-label="Close">${icon(11, 11, svg`<path d="M.5.500l10 10M10.500.500l-10 10" stroke="#222"/>`)}</button>
        </div></header>
      <button class="orb" aria-label="Office Button">
        <svg width="36" height="36" viewBox="0 0 36 36"><defs><linearGradient id="o" x2="0" y2="1"><stop offset="0" stop-color="#fff" /><stop offset=".5" stop-color="#dde1e8" /><stop offset=".55" stop-color="#b9c2d0" /><stop offset="1" stop-color="#f4f7fb" /></linearGradient></defs>
          <circle cx="18" cy="18" r="17" fill="url(#o)" stroke="#7f8ba3" />
          <g fill="none" stroke-width="3"><path d="M15 18H8.500V8.500H18V14" stroke="#d9502a" /><path d="M19 12h7v7h-6" stroke="#f2b233" /><path d="M16 20h-6v9h8v-7" stroke="#f0a42c" /><path d="M20 20h7v7h-7z" stroke="#3b82c9" /><path d="M19 22v6h5" stroke="#6fae3d" /></g>
          <path d="M14.500 15.500h9v9h-9zM19 13v14M12 20h14" fill="none" stroke="#fff" stroke-width="1.200" /></svg>
      </button>
      <nav class="tabs">
        ${["Home", "Insert", "Page Layout", "Formulas", "Data", "Review", "View", "Developer"].map((t, i) => html`<button class=${i ? "" : "on"}>${t}</button>`)}
        <div class="docbtns">
          <button aria-label="Help">${icon(13, 13, svg`<circle cx="6.500" cy="6.500" r="6" fill="#2f66d0" stroke="#dbe8fa"/><path d="M4.500 5a2 2 0 1 1 2.800 1.800l-.8.700v.8M6.500 9.500v1.200" stroke="#fff" stroke-width="1.400" fill="none"/>`)}</button>
          <button aria-label="Minimize workbook">${icon(8, 9, svg`<path d="M1 7.500h6" stroke="#6c7683" stroke-width="1.500"/>`)}</button>
          <button aria-label="Restore workbook">${icon(9, 9, svg`<path d="M1 3.500h6v4H1zM2.500 1.500H8V5" fill="none" stroke="#6c7683" stroke-width="1.300"/>`)}</button>
          <button aria-label="Close workbook">${icon(9, 9, svg`<path d="M1 1l7 7M8 1L1 8" stroke="#6c7683" stroke-width="1.800"/>`)}</button>
        </div>
      </nav>
      ${this.ribbon()}
      <div class="qat">
        <button aria-label="Save">${I.save}</button><button aria-label="Undo">${I.undo}${caret}</button><button aria-label="Redo">${I.redo}${caret}</button><span class="bar"></span>
        <button aria-label="Chart">${I.q1}</button><button aria-label="Table">${I.q2}</button><button aria-label="Print Preview">${I.q3}</button>
        <label class="combo gen"><select aria-label="Number format"><option>General</option></select>${caret}</label>
        <button aria-label="Design Mode">${I.q4}</button><button aria-label="Form">${I.q5}</button><button aria-label="Camera">${I.q6}</button>
        <button aria-label="Customize">${icon(6, 7, svg`<path d="M0 .5h6M0 3h6L3 6z" fill="#23437d" stroke="#23437d" stroke-width=".8"/>`)}</button>
      </div>
      <div class="fbar">
        <input class="name" aria-label="Name box" value="B1" /><button class="nd" aria-label="Names">${icon(7, 4, svg`<path d="M0 0h7L3.500 4z" fill="#111"/>`)}</button>
        <button class="fx"><i></i>fx</button><input class="val" aria-label="Formula" value="Nested IF Function" />
        <button class="spin" aria-label="Scroll formula">${icon(7, 4, svg`<path d="M0 4h7L3.500 0z" fill="#33508a"/>`)}${icon(7, 4, svg`<path d="M0 0h7L3.500 4z" fill="#33508a"/>`)}</button>
        <button class="exp" aria-label="Expand">${icon(7, 8, svg`<path d="M.5.500l3 3 3-3M.5 4l3 3 3-3" fill="none" stroke="#111" stroke-width="1.400"/>`)}</button>
      </div>
      <main class="mid"><div class="view">${this.sheet()}</div>
        <div class="vs"><i></i><button aria-label="Up">${icon(7, 4, svg`<path d="M0 4h7L3.500 0z" fill="#33508a"/>`)}</button>
          <button class="thumb" aria-label="Scroll">${icon(7, 8, svg`<path d="M0 1h7M0 3.500h7M0 6h7" stroke="#7f93b4"/>`)}</button><span class="track"></span>
          <button aria-label="Down">${icon(7, 4, svg`<path d="M0 0h7L3.500 4z" fill="#33508a"/>`)}</button></div></main>
      <div class="foot">
        <div class="nav">
          <button aria-label="First">${icon(6, 7, svg`<path d="M.5 0v7M6 0v7L2 3.500z" fill="currentColor" stroke="currentColor" stroke-width=".8"/>`)}</button>
          <button aria-label="Previous">${icon(4, 7, svg`<path d="M4 0v7L0 3.500z" fill="currentColor"/>`)}</button>
          <button aria-label="Next">${icon(4, 7, svg`<path d="M0 0v7l4-3.500z" fill="currentColor"/>`)}</button>
          <button aria-label="Last">${icon(6, 7, svg`<path d="M5.500 0v7M0 0v7l4-3.500z" fill="currentColor" stroke="currentColor" stroke-width=".8"/>`)}</button>
        </div>
        <div class="sheets">${SHEETS.map((s) => html`<button class=${s === "IF" ? "act" : ""}>${s}</button>`)}</div>
        <span class="grip"></span>
        <div class="hs"><button aria-label="Left">${icon(4, 7, svg`<path d="M4 0v7L0 3.500z" fill="currentColor"/>`)}</button>
          <button class="thumb" aria-label="Scroll">${icon(8, 7, svg`<path d="M.5 0v7M3 0v7M5.500 0v7M7.500 0v7" stroke="#7f93b4"/>`)}</button><span class="track"></span>
          <button aria-label="Right">${icon(4, 7, svg`<path d="M0 0v7l4-3.500z" fill="currentColor"/>`)}</button><span class="grip"></span><span class="gap"></span></div>
      </div>
      <footer class="status"><span class="rd">Ready</span>
        <button class="mac" aria-label="Record macro">${icon(14, 13, svg`<rect x="1.500" y="1.500" width="12" height="11" fill="#fff" stroke="#5a76ae"/><path d="M2 3h11" stroke="#5a76ae" stroke-width="2"/><path d="M3 7h9M3 10h9M6 5v7M9.500 5v7" stroke="#a9b9d6"/><circle cx="3.500" cy="3.500" r="3" fill="#d8492f"/>`)}</button>
        <div class="zoomer"><div class="views">
          <button class="on" aria-label="Normal">${icon(13, 11, svg`<path d="M.5.500h12v10H.5zM.5 4h12M.5 7.500h12M4.500.500v10M8.500.500v10" fill="#fff" stroke="#6a5a33"/>`)}</button>
          <button aria-label="Page Layout">${icon(12, 11, svg`<rect x=".5" y=".5" width="11" height="10" fill="#b9c0cb" stroke="#555"/><rect x="3.500" y="2.500" width="5" height="6" fill="#fff" stroke="#555"/>`)}</button>
          <button aria-label="Page Break">${icon(12, 11, svg`<rect x=".5" y=".5" width="11" height="10" fill="#fff" stroke="#555"/><path d="M4.500.500v7h4v-7M.5 8h11" fill="#b9c0cb" stroke="#555"/>`)}</button></div>
          <span class="pct">115%</span>
          <button aria-label="Zoom out">${icon(15, 15, svg`<circle cx="7.500" cy="7.500" r="6.500" fill="#eef3fb" stroke="#4d6da3"/><path d="M4 7.500h7" stroke="#333" stroke-width="1.500"/>`)}</button>
          <input class="range" type="range" min="0" max="100" value="50" aria-label="Zoom" />
          <button aria-label="Zoom in">${icon(15, 15, svg`<circle cx="7.500" cy="7.500" r="6.500" fill="#eef3fb" stroke="#4d6da3"/><path d="M4 7.500h7M7.500 4v7" stroke="#333" stroke-width="1.500"/>`)}</button>
        </div></footer>
      <div class="task">
        <button class="start" aria-label="Start">${icon(16, 16, svg`<path d="M0 2.300l6.500-.9v6.100H0zM7.500 1.200L16 0v7.500H7.500zM0 8.500h6.500v6.100L0 13.700zM7.500 8.500H16V16l-8.500-1.200z" fill="#fff"/>`)}</button>
        <input class="search" aria-label="Search" placeholder="Search the web and Windows" />
        <div class="apps">${APPS.map((a) => html`<button class=${a.open} aria-label=${a.name}>${a.art}</button>`)}</div>
        <div class="tray">
          ${icon(11, 7, svg`<path d="M.5 6l5-5 5 5" stroke="#eee" stroke-width="1.300" fill="none"/>`)}
          ${icon(16, 13, svg`<path d="M1 4.500h2.500L7 1v11L3.500 8.500H1z" fill="none" stroke="#eee"/><path d="M9 4.500q1.500 2 0 4M11 3q2.500 3.500 0 7" fill="none" stroke="#eee"/><path d="M13 1.500q3.500 5 0 10" fill="none" stroke="#777"/>`)}
          ${icon(16, 11, svg`<path d="M1 0v3M4 0v3M0 3.500h5v2H0zM2.500 5v5" stroke="#eee" fill="none"/><rect x="5.500" y="2.500" width="9" height="7" fill="none" stroke="#eee"/><rect x="7" y="4" width="6" height="4" fill="#eee"/><path d="M15.500 4.500v3" stroke="#eee"/>`)}
          ${icon(13, 12, svg`<path d="M1 11A10.500 10.500 0 0 1 11.500.500M4 11.500A8 8 0 0 1 12 3.500M7 11.500A5 5 0 0 1 12 6.500" stroke="#ddd" fill="none" stroke-width="1.300"/><circle cx="11" cy="10.500" r="1.500" fill="#eee"/>`)}
          ${icon(16, 15, svg`<path d="M0 0h15v11H7l-3 3v-3H0z" fill="#eee"/><path d="M2 3h11M2 5.500h11M2 8h5" stroke="#222"/><circle cx="11.500" cy="10.500" r="4" fill="#222" stroke="#eee"/><path d="M9.500 10.500h4" stroke="#eee"/>`)}
          <span>ENG</span><div class="clock">9:59 PM<br />01-Sep-24</div>
        </div>
      </div>
      <span class="handle"></span>
      <div class="frame"></div>
      <svg class="cursor" width="17" height="16" viewBox="0 0 17 16"><path d="M6 1h4v4.500h5v4h-5V14H6V9.500H1.500v-4H6z" fill="#fff" stroke="#111" stroke-width="1.500" /></svg>
      <button class="sub">SUBSCRIBE<svg width="34" height="36" viewBox="0 0 34 36"><path d="M15 1.500a2 2 0 0 1 4 0V6c5.500 1 8.500 4.500 8.500 10v7c0 3 3 6 5.500 11.500H1C3.500 29 6.500 26 6.500 23v-7C6.500 10.500 9.500 7 15 6z" fill="#fff" /></svg></button>
      <p class="wm"><span>Activate Windows</span>Go to Settings to activate Windows.</p>
    `;
  }
}
